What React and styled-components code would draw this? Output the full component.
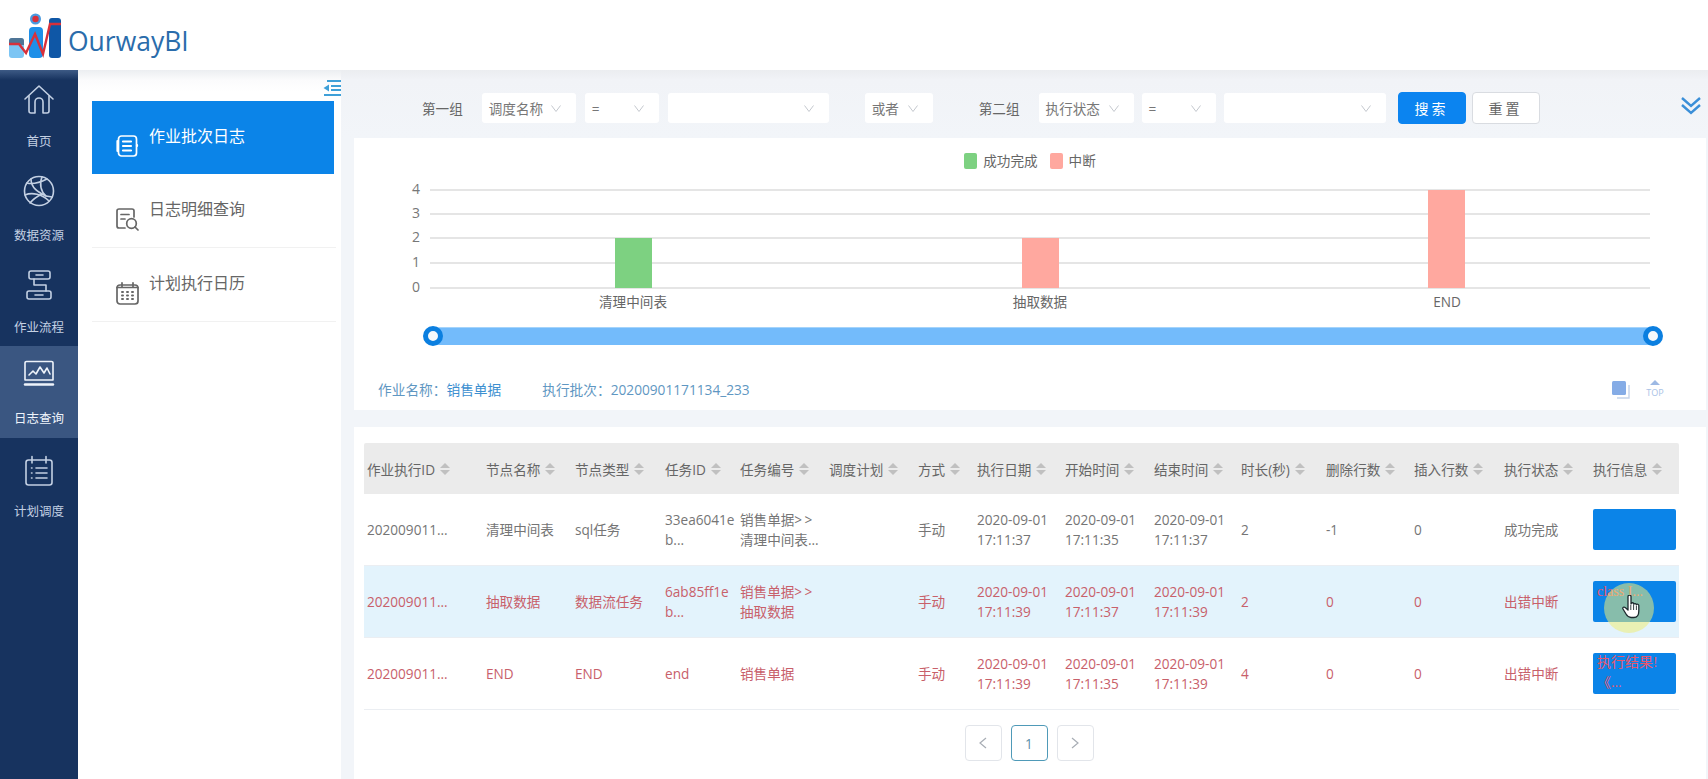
import React from 'react';
import styled, { createGlobalStyle } from 'styled-components';

const Global = createGlobalStyle`
  html, body { margin: 0; padding: 0; background: #fff; }
  body { font-family: "Open Sans", "Noto Sans CJK SC", sans-serif; color: #666; }
  #root { width: 1708px; height: 779px; overflow: hidden; }
`;

const Page = styled.div`display: flex; flex-direction: column; width: 1708px; height: 779px; overflow: hidden;`;
const Header = styled.header`
  flex: 0 0 70px; display: flex; align-items: center; padding-left: 9px; gap: 7px; background: #fff;
`;
const LogoText = styled.span`font-size: 26.5px; color: #2a6cab; letter-spacing: 0; margin-top: 11px; font-family: "Open Sans", sans-serif;`;
const Body = styled.div`flex: 1; display: flex; min-height: 0;`;

const Rail = styled.nav`
  flex: 0 0 78px; background: linear-gradient(#3d5a85 0, #17335f 10px, #17335f 100%); display: flex; flex-direction: column;
`;
const RailItem = styled.div`
  height: 92px; box-sizing: border-box; padding-top: ${p => p.$top}px; display: flex; flex-direction: column; align-items: center;
  background: ${p => (p.$active ? '#3a5681' : 'transparent')}; color: ${p => (p.$active ? '#eef3fa' : '#c3d0e3')};
`;
const RailIcon = styled.svg`width: 34px; height: 34px; fill: none; stroke: currentColor; stroke-width: 1.6; stroke-linejoin: round; stroke-linecap: round; flex: none;`;
const RailLabel = styled.span`font-size: 12.5px; line-height: 16px; margin-top: ${p => p.$mt}px; white-space: nowrap;`;

const SubPanel = styled.aside`
  flex: 0 0 263px; box-sizing: border-box; padding: 31px 5px 0 14px; position: relative;
  background: linear-gradient(#eceef1 0, #fbfbfc 10px, #fff 22px);
`;
const Collapse = styled.svg`position: absolute; left: 245px; top: 10px; width: 18px; height: 16px; fill: #3fa0d8;`;
const MenuItem = styled.div`
  height: ${p => (p.$active ? 73 : 74)}px; box-sizing: border-box; width: ${p => (p.$active ? '242px' : '244px')}; display: flex; align-items: center; padding-left: 23px; gap: 10px;
  background: ${p => (p.$active ? '#0b84e8' : 'transparent')}; color: ${p => (p.$active ? '#fff' : '#666')};
  border-bottom: ${p => (p.$active ? 'none' : '1px solid #f1f1f1')};
  font-size: 16px; line-height: 24px;
`;
const MenuIcon = styled.svg`width: 24px; height: 24px; margin-top: 16px; fill: none; stroke: currentColor; stroke-width: 1.7; stroke-linecap: round; stroke-linejoin: round; flex: none;`;
const MenuText = styled.span`margin-top: -3px;`;

const Main = styled.main`flex: 1; min-width: 0; background: #f2f5f9; padding: 0 2px 0 13px; display: flex; flex-direction: column;`;
const FilterBar = styled.div`
  flex: 0 0 68px; box-sizing: border-box; display: flex; align-items: center; padding: 8px 16px 0 81px; margin-left: -13px; margin-right: -2px;
  background: linear-gradient(#ebedf0 0, #f1f3f7 10px, #f2f5f9 100%); font-size: 13.6px;
`;
const FilterLabel = styled.span`margin-left: ${p => p.$gap || 0}px; margin-right: 19px; color: #666; white-space: nowrap;`;
const SelectBox = styled.div`
  box-sizing: border-box; width: ${p => p.$w}px; height: 30px; margin-left: ${p => p.$gap || 0}px; background: #fff; border-radius: 3px;
  display: flex; align-items: center; justify-content: space-between; padding: 0 15px 0 7px; color: #777; white-space: nowrap; font-size: 13.6px;
`;
const Chevron = styled.svg`width: 10px; height: 7px; fill: none; stroke: #c4c8ce; stroke-width: 1; flex: none;`;
const Btn = styled.button`
  box-sizing: border-box; height: 32px; width: ${p => p.$w}px; margin-left: ${p => p.$gap}px; border-radius: 4px; font: inherit; font-size: 14px; letter-spacing: 3px;
  background: ${p => (p.$primary ? '#0b84f0' : '#fff')}; color: ${p => (p.$primary ? '#fff' : '#666')};
  border: 1px solid ${p => (p.$primary ? '#0b84f0' : '#d9dce1')};
`;
const Expand = styled.svg`margin-left: auto; margin-right: -9px; width: 20px; height: 20px; fill: none; stroke: #3b8fd8; stroke-width: 2.4; margin-top: -5px;`;

const ChartCard = styled.section`flex: 0 0 272px; box-sizing: border-box; background: #fff; padding-top: 15px; display: flex; flex-direction: column;`;
const Legend = styled.div`display: flex; justify-content: center; align-items: center; height: 16px; font-size: 13.6px; color: #666; padding-right: 0;`;
const LegendSwatch = styled.i`width: 13px; height: 16px; border-radius: 2px; background: ${p => p.$c}; margin: 0 6px 0 ${p => p.$gap || 0}px;`;
const LegendText = styled.span`margin-top: -3px;`;
const ChartSvg = styled.svg`display: block; width: 1352px; height: 140px; margin-top: 6px; flex: none;`;
const Track = styled.div`position: relative; height: 18px; margin: 12px 53px 0 79px; background: #73bbfb; border-top: 1px solid #a5d4fb; box-sizing: border-box;`;
const Handle = styled.span`
  position: absolute; top: -2px; ${p => p.$side}: -10px; width: 20px; height: 20px; box-sizing: border-box; border-radius: 50%; background: #f4f8fb; border: 5px solid #0b7fe0;
`;
const InfoRow = styled.div`display: flex; align-items: center; height: 20px; margin-top: 34px; padding: 0 41px 0 24px; gap: 41px; font-size: 13.7px; white-space: nowrap;`;
const InfoText = styled.span`color: #5f97c2;`;
const InfoValue = styled.span`color: #3c8fd0;`;
const InfoIcons = styled.div`margin-left: auto; display: flex; align-items: center; gap: 15px;`;

const TableCard = styled.section`flex: 1; min-height: 0; margin-top: 17px; background: #fff; padding: 16px 27px 0 10px;`;
const COLS = '119px 89px 90px 75px 89px 89px 59px 88px 89px 87px 85px 88px 90px 89px 89px';
const HeadRow = styled.div`display: grid; grid-template-columns: ${COLS}; height: 51px; align-items: center; background: #ebebeb; font-size: 13.6px; color: #666; border-radius: 2px 2px 0 0;`;
const HeadCell = styled.div`display: flex; align-items: center; padding-left: 3px; gap: 5px; white-space: nowrap;`;
const Caret = styled.span`
  display: inline-flex; flex-direction: column; gap: 2px; flex: none;
  &::before, &::after { content: ''; width: 0; height: 0; border-left: 5px solid transparent; border-right: 5px solid transparent; }
  &::before { border-bottom: 5px solid #c0c0c0; }
  &::after { border-top: 5px solid #c0c0c0; }
`;
const Row = styled.div`
  display: grid; grid-template-columns: ${COLS}; height: 72px; box-sizing: border-box; align-items: center; border-bottom: 1px solid #ebeef2;
  font-size: 13.6px; line-height: 20px; color: ${p => (p.$error ? '#c8606a' : '#757575')}; background: ${p => (p.$hover ? '#e3f3fc' : '#fff')};
  &:first-of-type { height: 71px; }
`;
const Cell = styled.div`padding-left: 3px; white-space: pre-line; overflow: visible;`;
const InfoCell = styled.div`padding-left: 3px; position: relative;`;
const InfoBtn = styled.div`
  position: relative; box-sizing: border-box; width: 83px; height: 41px; background: #0b84e8; border-radius: 2px; padding: ${p => (p.$oneLine ? 1 : 0)}px 4px 0;
  font-family: "Liberation Serif", "Noto Sans CJK SC", serif; font-size: 14px; line-height: 20px; color: #e8566c; white-space: pre-line;
`;
const Cursor = styled.div`
  position: absolute; left: 11px; top: 2px; width: 50px; height: 50px; border-radius: 50%; background: rgba(238, 236, 120, 0.55);
  display: flex; align-items: center; justify-content: center;
`;
const HandSvg = styled.svg`width: 18px; height: 24px; margin: -2px 0 0 3px;`;

const Pager = styled.div`display: flex; justify-content: center; gap: 9px; margin-top: 15px; padding-left: 15px;`;
const PageBtn = styled.div`
  box-sizing: border-box; width: 37px; height: 36px; border-radius: 4px; display: flex; align-items: center; justify-content: center; font-size: 13.6px; color: #5a8fa8;
  border: 1px solid ${p => (p.$active ? '#4f9ab8' : '#e2e5ea')};
`;
const PagerChevron = styled.svg`width: 8px; height: 12px; fill: none; stroke: #a8adb5; stroke-width: 1.2;`;

const Down = () => <Chevron viewBox="0 0 10 7"><path d="M0.5 0.5 L5 6.5 L9.5 0.5" /></Chevron>;

const Logo = () => (
  <svg width="52" height="46" viewBox="0 0 52 46" style={{ marginTop: 2 }}>
    <rect x="0" y="25" width="15" height="20" rx="3" fill="#7cc5f4" />
    <path d="M0 28a3 3 0 0 1 3-3h9a3 3 0 0 1 3 3v4H0z" fill="#4f7596" />
    <rect x="20" y="14" width="14" height="31" rx="4" fill="#1e8fe8" />
    <circle cx="26.5" cy="6" r="5.5" fill="#4a9ae0" />
    <circle cx="26.5" cy="6" r="3.2" fill="#d8303a" />
    <rect x="40" y="5" width="12" height="40" rx="3" fill="#0f57a6" />
    <path d="M0 31 H10 L17 40 L26 21 L34 41 L41 11 H52" fill="none" stroke="#d8303a" strokeWidth="2.4" />
  </svg>
);

const railIcons = {
  home: <><path d="M3 17 L17 4 L31 17" /><path d="M7 14 V29 a2 2 0 0 0 2 2 H13 V20 a4 4 0 0 1 8 0 V31 H25 a2 2 0 0 0 2-2 V14" /></>,
  globe: <><circle cx="17" cy="17" r="14.5" /><path d="M5 9 C12 11 19 8 25 5" /><path d="M9 5 C9 14 16 18 24 22 L30 23" /><path d="M3 21 C10 18 20 20 27 27" /><path d="M20 3 C17 10 19 18 24 22" /><path d="M8 29 C12 24 16 22 20 20" /></>,
  flow: <><rect x="7" y="3" width="21" height="8" rx="2" /><rect x="5" y="23" width="24" height="8" rx="2" /><path d="M12 11 V17 H24 V23" /><path d="M14 7 H21 M13 27 H21" /></>,
  monitor: <><path d="M3 23 V6 a1.5 1.5 0 0 1 1.5-1.5 H29.5 A1.5 1.5 0 0 1 31 6 V23 Z" /><path d="M3 27.5 H31" strokeWidth="2.4" /><path d="M7 18 L11 14 L14 17 L18 10 L22 16 L25 11 L28 17" /></>,
  plan: <><rect x="4" y="6" width="26" height="25" rx="2.5" /><path d="M10 2.5 V9 M24 2.5 V9" /><path d="M14 14 H25 M14 19 H25 M14 24 H25" /><path d="M9.5 14 H10 M9.5 19 H10 M9.5 24 H10" /></>,
};

const rail = [
  { k: 'home', t: '首页', top: 12, mt: 18 },
  { k: 'globe', t: '数据资源', top: 12, mt: 20 },
  { k: 'flow', t: '作业流程', top: 14, mt: 18 },
  { k: 'monitor', t: '日志查询', top: 11, mt: 20, active: true },
  { k: 'plan', t: '计划调度', top: 16, mt: 16 },
];

const menuIcons = [
  <><rect x="3.5" y="2" width="18" height="20" rx="3" /><path d="M8 7.5 H16 M8 12 H16 M8 16.5 H16" strokeWidth="2.2" /><path d="M2.5 7 V17 M22 11 v1" strokeWidth="2.2" /></>,
  <><path d="M19 10 V4 a2 2 0 0 0-2-2 H4 a2 2 0 0 0-2 2 V19 a2 2 0 0 0 2 2 H10" /><path d="M6 7.5 H14 M6 12 H10" /><circle cx="16.5" cy="16.5" r="4.8" /><path d="M20 20 L23 23" /></>,
  <><rect x="2" y="4" width="21" height="19" rx="3" /><path d="M7 1.8 V6 M18 1.8 V6 M2 6.5 H23" /><path d="M7 11 h1 M12 11 h1 M17 11 h1 M7 14.5 h1 M12 14.5 h1 M17 14.5 h1 M7 18 h1 M12 18 h1 M17 18 h1" strokeWidth="2" /></>,
];

const heads = ['作业执行ID', '节点名称', '节点类型', '任务ID', '任务编号', '调度计划', '方式', '执行日期', '开始时间', '结束时间', '时长(秒)', '删除行数', '插入行数', '执行状态', '执行信息'];

const rows = [
  { cells: ['202009011...', '清理中间表', 'sql任务', '33ea6041e\nb...', '销售单据>\u2009>\n清理中间表...', '', '手动', '2020-09-01\n17:11:37', '2020-09-01\n17:11:35', '2020-09-01\n17:11:37', '2', '-1', '0', '成功完成'], info: '' },
  { error: true, hover: true, cursor: true, cells: ['202009011...', '抽取数据', '数据流任务', '6ab85ff1e\nb...', '销售单据>\u2009>\n抽取数据', '', '手动', '2020-09-01\n17:11:39', '2020-09-01\n17:11:37', '2020-09-01\n17:11:39', '2', '0', '0', '出错中断'], info: 'class I...', oneLine: true },
  { error: true, cells: ['202009011...', 'END', 'END', 'end', '销售单据', '', '手动', '2020-09-01\n17:11:39', '2020-09-01\n17:11:35', '2020-09-01\n17:11:39', '4', '0', '0', '出错中断'], info: '执行结果!\n 《...' },
];

const gridY = [10, 34, 58, 83, 108];
const yLabels = ['4', '3', '2', '1', '0'];

export default function App() {
  return (
    <Page>
      <Global />
      <Header>
        <Logo />
        <LogoText>OurwayBI</LogoText>
      </Header>
      <Body>
        <Rail>
          {rail.map(r => (
            <RailItem key={r.k} $active={r.active} $top={r.top}>
              <RailIcon viewBox="0 0 34 34">{railIcons[r.k]}</RailIcon>
              <RailLabel $mt={r.mt}>{r.t}</RailLabel>
            </RailItem>
          ))}
        </Rail>
        <SubPanel>
          <Collapse viewBox="0 0 18 16">
            <path d="M4 0 H18 V2 H4 Z M8 5 H18 V7 H8 Z M8 9 H18 V11 H8 Z M1 14 H18 V16 H1 Z M6 4.5 V11.5 L0.5 8 Z" />
          </Collapse>
          {['作业批次日志', '日志明细查询', '计划执行日历'].map((t, i) => (
            <MenuItem key={t} $active={i === 0}>
              <MenuIcon viewBox="0 0 24 24">{menuIcons[i]}</MenuIcon>
              <MenuText>{t}</MenuText>
            </MenuItem>
          ))}
        </SubPanel>
        <Main>
          <FilterBar>
            <FilterLabel>第一组</FilterLabel>
            <SelectBox $w={94}>调度名称<Down /></SelectBox>
            <SelectBox $w={74} $gap={9}>=<Down /></SelectBox>
            <SelectBox $w={161} $gap={9}><span /><Down /></SelectBox>
            <SelectBox $w={68} $gap={36}>或者<Down /></SelectBox>
            <FilterLabel $gap={46}>第二组</FilterLabel>
            <SelectBox $w={95}>执行状态<Down /></SelectBox>
            <SelectBox $w={74} $gap={8}>=<Down /></SelectBox>
            <SelectBox $w={162} $gap={8}><span /><Down /></SelectBox>
            <Btn $primary $w={68} $gap={12}>搜索</Btn>
            <Btn $w={68} $gap={6}>重置</Btn>
            <Expand viewBox="0 0 20 20"><path d="M1 2 L10 10 L19 2 M1 9 L10 17 L19 9" /></Expand>
          </FilterBar>
          <ChartCard>
            <Legend>
              <LegendSwatch $c="#7dd181" /><LegendText>成功完成</LegendText>
              <LegendSwatch $c="#ffa89f" $gap={12} /><LegendText>中断</LegendText>
            </Legend>
            <ChartSvg viewBox="0 0 1352 140">
              {gridY.map((y, i) => (
                <g key={y}>
                  <line x1="76" x2="1296" y1={y + 5} y2={y + 5} stroke="#dcdcdc" strokeWidth="1.4" />
                  <text x="62" y={y + 9} fontSize="14" fill="#777" textAnchor="middle" fontFamily="Open Sans">{yLabels[i]}</text>
                </g>
              ))}
              <rect x="261" y="63" width="37" height="50" fill="#7dd181" />
              <rect x="668" y="63" width="37" height="50" fill="#ffa89f" />
              <rect x="1074" y="15" width="37" height="98" fill="#ffa89f" />
              {[['清理中间表', 279], ['抽取数据', 686], ['END', 1093]].map(([t, x]) => (
                <text key={t} x={x} y="132" fontSize="13.6" fill="#666" textAnchor="middle" fontFamily="Open Sans, Noto Sans CJK SC">{t}</text>
              ))}
            </ChartSvg>
            <Track><Handle $side="left" /><Handle $side="right" /></Track>
            <InfoRow>
              <InfoText>作业名称：<InfoValue>销售单据</InfoValue></InfoText>
              <InfoText>执行批次：20200901171134_233</InfoText>
              <InfoIcons>
                <svg width="19" height="19" viewBox="0 0 19 19">
                  <path d="M6 18 H18 V5" fill="none" stroke="#c5d3ea" strokeWidth="1.4" />
                  <rect x="1" y="1" width="14" height="14" rx="1.5" fill="#85ace6" />
                </svg>
                <svg width="20" height="20" viewBox="0 0 20 20">
                  <path d="M10 1 L15 6 H5 Z" fill="#9db9e4" />
                  <text x="10" y="17" fontSize="9" textAnchor="middle" fill="#a9c2e6" fontFamily="Open Sans">TOP</text>
                </svg>
              </InfoIcons>
            </InfoRow>
          </ChartCard>
          <TableCard>
            <HeadRow>
              {heads.map(h => <HeadCell key={h}>{h}<Caret /></HeadCell>)}
            </HeadRow>
            {rows.map((r, i) => (
              <Row key={i} $error={r.error} $hover={r.hover}>
                {r.cells.map((c, j) => <Cell key={j}>{c}</Cell>)}
                <InfoCell>
                  <InfoBtn $oneLine={r.oneLine}>
                    {r.info}
                    {r.cursor && (
                      <Cursor>
                        <HandSvg viewBox="0 0 18 24">
                          <path d="M6 1.5 a1.5 1.5 0 0 1 3 0 V9 a1.4 1.4 0 0 1 2.8 0.3 a1.4 1.4 0 0 1 2.6 0.5 a1.3 1.3 0 0 1 2.4 0.8 V16 c0 4-2 6.5-5 6.5 H9 c-2.5 0-3.6-1.2-5-3.5 L1 14 c-0.8-1.5 1-2.6 2.2-1.4 L6 15 Z" fill="#fff" stroke="#1d2a2e" strokeWidth="1.3" strokeLinejoin="round" />
                          <path d="M8.8 10 V15 M11.6 10 V15 M14.4 11 V15" stroke="#1d2a2e" strokeWidth="0.9" />
                        </HandSvg>
                      </Cursor>
                    )}
                  </InfoBtn>
                </InfoCell>
              </Row>
            ))}
            <Pager>
              <PageBtn><PagerChevron viewBox="0 0 8 12"><path d="M7 1 L1 6 L7 11" /></PagerChevron></PageBtn>
              <PageBtn $active>1</PageBtn>
              <PageBtn><PagerChevron viewBox="0 0 8 12"><path d="M1 1 L7 6 L1 11" /></PagerChevron></PageBtn>
            </Pager>
          </TableCard>
        </Main>
      </Body>
    </Page>
  );
}
